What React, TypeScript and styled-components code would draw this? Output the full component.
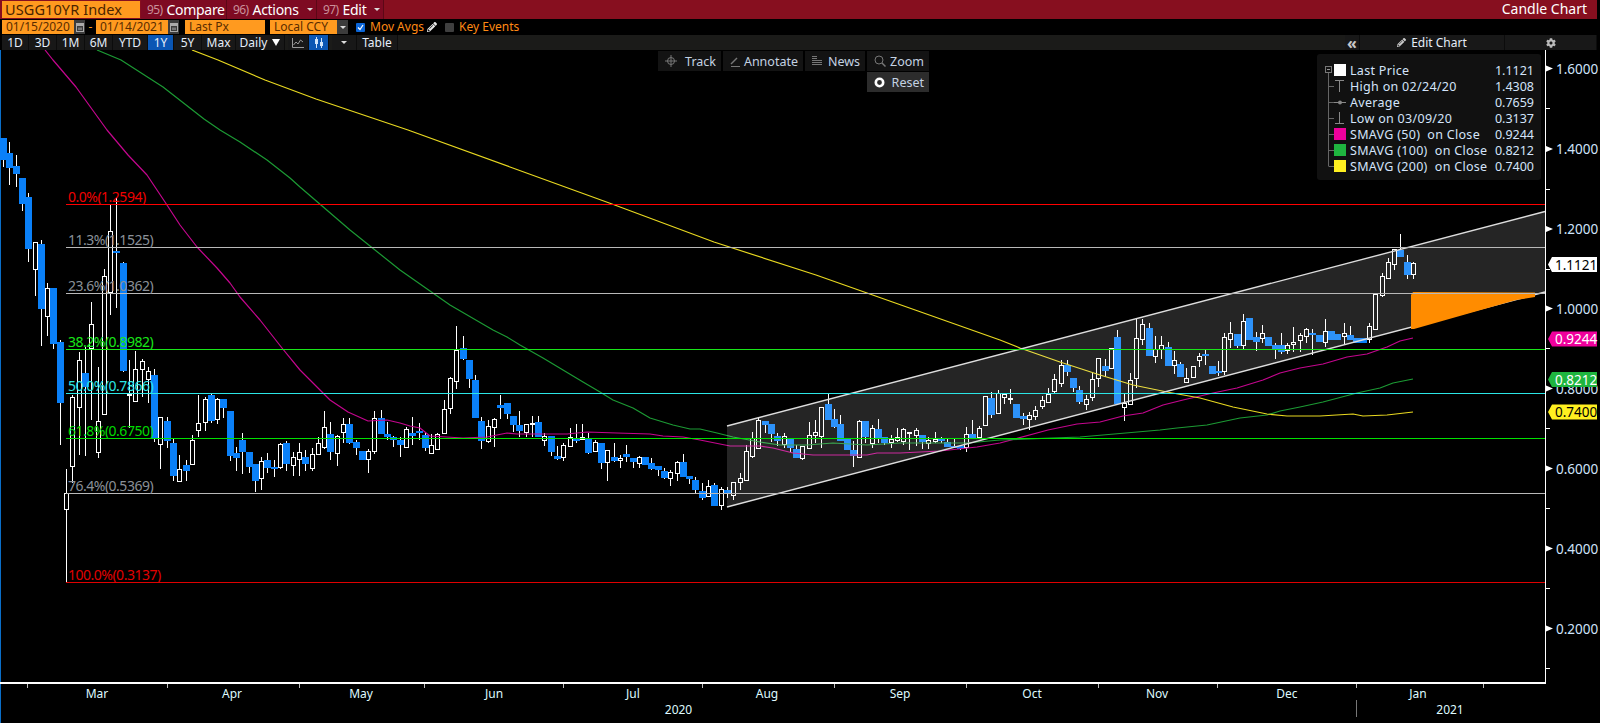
import React from 'react';
import styled, { createGlobalStyle } from 'styled-components';
import { FaCog, FaPencilAlt } from 'react-icons/fa';

const GlobalStyle = createGlobalStyle`
  html, body { margin: 0; padding: 0; background: #000; }
  body { font-family: "Noto Sans", "Open Sans", Arial, sans-serif; }
`;

const FONT = '"Noto Sans", "Open Sans", Arial, sans-serif';

const Page = styled.div`
  width: 1600px;
  height: 723px;
  background: #000;
  overflow: hidden;
  display: flex;
  flex-direction: column;
`;

const TitleBar = styled.div`
  height: 19px;
  margin-right: 3px;
  background: #870f1f;
  display: flex;
  align-items: stretch;
`;

const Ticker = styled.div`
  width: 138px;
  margin: 1px 1px 1px 2px;
  padding-left: 3px;
  background: #ff9a1f;
  color: #4a2400;
  font-size: 14.5px;
  line-height: 16px;
  letter-spacing: 0.1px;
  box-sizing: border-box;
`;

const Tab = styled.div<{ $w: number }>`
  width: ${(p) => p.$w}px;
  background: #7e0a22;
  border-right: 1px solid #5c0716;
  box-sizing: border-box;
  display: flex;
  align-items: center;
  padding-left: 6px;
  gap: 4px;
  color: #fff;
  font-size: 14px;
  letter-spacing: -0.3px;
`;

const TabCode = styled.span`
  color: #c9909a;
  font-size: 12px;
  letter-spacing: -0.6px;
`;

const Caret = styled.span`
  width: 0;
  height: 0;
  margin-left: 4px;
  border-left: 3px solid transparent;
  border-right: 3px solid transparent;
  border-top: 3px solid #ddd;
`;

const TitleRight = styled.div`
  margin-left: auto;
  padding-right: 10px;
  color: #fff;
  font-size: 14px;
  line-height: 18px;
`;

const ParamBar = styled.div`
  height: 14px;
  margin-top: 1px;
  display: flex;
  align-items: stretch;
  padding-left: 2px;
`;

const OrangeField = styled.div<{ $w: number; $ml?: number }>`
  width: ${(p) => p.$w}px;
  margin-left: ${(p) => p.$ml || 0}px;
  background: #ff9a1f;
  color: #5a2c00;
  font-size: 12px;
  line-height: 14px;
  padding-left: 4px;
  box-sizing: border-box;
`;

const FieldButton = styled.div`
  width: 11px;
  background: #3c3c3c;
  display: flex;
  align-items: center;
  justify-content: center;
`;

const Dash = styled.div`
  width: 11px;
  color: #ff9a1f;
  text-align: center;
  font-size: 12px;
  line-height: 14px;
`;

const Check = styled.div<{ $on?: boolean; $ml: number }>`
  width: 9px;
  height: 9px;
  align-self: center;
  margin-left: ${(p) => p.$ml}px;
  background: ${(p) => (p.$on ? '#0b66d8' : '#3f3f3f')};
  border-radius: 1px;
  display: flex;
  align-items: center;
  justify-content: center;
`;

const ParamLabel = styled.div<{ $ml: number }>`
  margin-left: ${(p) => p.$ml}px;
  color: #ff8a14;
  font-size: 12px;
  line-height: 14px;
`;

const RangeBar = styled.div`
  height: 15px;
  margin: 1px 3px 0 2px;
  display: flex;
  align-items: stretch;
  background: #1b1b19;
`;

const RangeButton = styled.div<{ $w: number; $active?: boolean; $ml?: number }>`
  width: ${(p) => p.$w}px;
  margin-left: ${(p) => p.$ml || 0}px;
  background: ${(p) => (p.$active ? '#0a56b4' : '#181818')};
  border-right: 1px solid #0c0c0c;
  box-sizing: border-box;
  display: flex;
  align-items: center;
  justify-content: center;
  gap: 5px;
  color: #e6eefa;
  font-size: 12px;
`;

const RangeFill = styled.div`
  flex: 1;
`;

const Chevrons = styled(RangeButton)`
  color: #c8c8c8;
  font-size: 16px;
  font-weight: 700;
`;

const ChartArea = styled.div`
  position: relative;
  flex: 1;
  border-left: 1px solid #0a6ec8;
`;

const ChartSvg = styled.svg`
  display: block;
  position: absolute;
  left: -1px;
  top: 0;
  width: 1600px;
  height: 673px;
  font-family: ${FONT};
`;

const ToolPanel = styled.div`
  position: absolute;
  left: 657px;
  top: 1px;
  display: grid;
  grid-template-columns: 63px 80px 60px 62px;
  grid-auto-rows: 20px;
  gap: 1px 2px;
`;

const ToolButton = styled.div<{ $pressed?: boolean }>`
  grid-column: ${(p) => (p.$pressed ? 4 : 'auto')};
  background: ${(p) => (p.$pressed ? '#2c2c2c' : '#131313')};
  display: flex;
  align-items: center;
  justify-content: space-between;
  padding: 0 5px 0 7px;
  color: #c4d2e2;
  font-size: 12.5px;
`;

const Legend = styled.div`
  position: absolute;
  left: 1316px;
  top: 4px;
  width: 224px;
  height: 126px;
  padding: 8px 7px 0 5px;
  box-sizing: border-box;
  background: #111;
  border-radius: 3px;
`;

const LegendRow = styled.div`
  height: 16px;
  display: flex;
  align-items: center;
  color: #d4e4fa;
  font-size: 12.5px;
  letter-spacing: 0.3px;
  white-space: pre;
`;

const LegendValue = styled.span`
  margin-left: auto;
  letter-spacing: 0;
`;

type Candle = ['w' | 'b', number, number, number, number, number];

// kind, x, body top, body bottom, high, low (all in page pixels)
const candles: Candle[] = [
  ['b',3.5,138,160,138,167],['b',9.5,153,168,142,185],['b',16.5,166,174,155,187],['b',22.5,178,204,178,211],
  ['b',28.5,197,249,193,262],['w',35,242,269,242,296],['b',41,244,309,240,346],['w',47,288,316,283,336],
  ['b',53.5,288,344,288,349],['b',60,342,403,340,445],['w',66,493,509,469,582],['w',72.5,397,466,395,483],
  ['w',79,360,407,352,455],['b',85,373,387,347,456],['w',91.5,324,348,302,420],['w',98,421,452,367,458],
  ['w',104,276,414,269,414],['w',110.5,231,292,205,315],['b',116.5,251,253,198,308],['b',123.5,263,371,262,372],
  ['w',129.5,394,395,360,428],['w',135,369,401,351,402],['w',142.5,361,369,359,397],['w',148.5,371,379,367,403],
  ['b',154.5,375,438,369,442],['w',160.5,417,444,417,469],['b',167.5,421,441,417,448],['b',173.5,443,476,439,481],
  ['w',179,469,481,455,482],['b',186,465,471,460,481],['w',192,440,464,435,464],['w',198,423,430,395,437],
  ['w',205,399,422,397,431],['b',211.5,395,421,393,423],['w',217.5,399,419,398,424],['b',223.5,399,408,399,418],
  ['b',230.5,411,456,411,461],['b',236.5,453,458,447,471],['b',242.5,440,452,433,474],['b',249,452,467,452,473],
  ['b',255,464,481,464,492],['w',261,461,478,457,490],['b',267.5,460,468,453,473],['b',274,467,469,460,477],
  ['w',280.5,444,467,443,469],['b',286.5,443,464,441,471],['w',293,457,465,452,476],['w',299,452,459,443,476],
  ['b',305.5,457,464,450,471],['w',312,454,468,448,471],['w',318,443,454,437,455],['w',324.5,427,447,411,449],
  ['b',330.5,434,452,422,460],['w',337,436,453,435,466],['w',343,424,432,418,443],['b',349.5,424,443,418,444],
  ['b',356.5,442,448,440,455],['b',362.5,451,460,451,460],['w',368.5,451,459,449,473],['w',374.5,418,451,411,454],
  ['b',381.5,418,434,410,434],['b',387.5,434,437,422,440],['b',393.5,437,440,436,447],['b',400.5,440,445,437,457],
  ['w',406.5,429,447,427,447],['b',412.5,433,436,417,445],['b',419.5,431,433,423,440],['b',425.5,435,448,433,451],
  ['w',431.5,445,453,434,453],['w',437.5,434,449,433,449],['w',444,409,433,400,434],['w',450.5,378,408,377,414],
  ['w',456.5,350,381,326,389],['b',463.5,348,359,336,360],['b',469.5,360,379,360,388],['b',475.5,380,418,375,418],
  ['b',481.5,421,441,417,449],['w',488.5,426,441,420,443],['w',494.5,419,427,418,447],['b',500.5,405,408,395,419],
  ['b',507.5,403,414,403,419],['b',513.5,416,425,416,432],['b',519.5,425,431,411,437],['w',526,424,432,424,437],
  ['w',532.5,423,424,416,437],['b',538.5,422,437,416,437],['w',544.5,436,440,433,446],['b',551.5,436,452,436,456],
  ['b',557.5,456,459,446,460],['w',563.5,445,457,443,461],['w',570.5,437,446,428,446],['b',576.5,438,441,424,443],
  ['w',582,437,439,424,439],['b',588.5,439,453,433,454],['w',595,442,451,440,452],['b',601.5,443,463,443,469],
  ['w',607.5,450,462,450,481],['b',614.5,457,461,443,462],['w',620.5,458,460,455,468],['b',626.5,454,457,445,462],
  ['b',633.5,458,462,458,468],['w',639.5,457,463,456,468],['b',645.5,457,465,457,465],['b',651.5,463,469,458,470],
  ['b',658.5,466,470,466,476],['b',664.5,471,478,468,479],['w',670.5,472,478,470,486],['w',677.5,462,473,461,481],
  ['b',683.5,462,477,454,477],['b',689.5,476,479,476,484],['b',695.5,480,490,477,493],['b',702.5,491,498,483,500],
  ['w',708.5,486,496,480,496],['b',714.5,485,506,483,506],['w',721,489,505,487,510],['b',727.5,490,493,487,498],
  ['w',733.5,482,495,482,500],['w',740,478,482,473,490],['w',746.5,451,480,445,480],['w',752.5,438,456,432,458],
  ['w',758.5,420,448,417,448],['b',765.5,421,425,421,433],['b',771.5,424,434,424,442],['b',777.5,436,441,433,446],
  ['w',784,436,444,433,448],['b',790.5,439,448,439,452],['b',796.5,449,458,445,458],['w',802.5,446,458,446,460],
  ['w',809,435,448,422,448],['w',815,432,435,420,443],['w',821.5,407,436,407,448],['b',828.5,404,420,393,420],
  ['b',834.5,419,427,409,428],['b',840.5,424,441,415,441],['b',847.5,439,450,439,450],['b',853.5,450,456,441,467],
  ['w',859.5,421,457,420,457],['b',865.5,421,437,421,443],['w',872,428,443,425,448],['b',878.5,429,439,419,443],
  ['b',884.5,437,443,437,445],['w',891,439,442,435,448],['w',897,437,440,428,442],['w',903,429,441,428,445],
  ['w',909.5,432,433,432,450],['w',916,430,435,428,446],['b',922.5,435,442,435,449],['w',928.5,440,443,437,449],
  ['w',935,439,441,432,443],['b',941.5,439,441,437,443],['b',947.5,442,447,438,447],['b',954.5,446,448,439,448],
  ['b',960.5,446,449,446,450],['w',966.5,434,447,427,452],['b',972.5,434,439,420,439],['w',979,428,437,426,437],
  ['w',985,396,425,396,425],['b',991.5,398,415,392,418],['w',998,393,413,390,413],['w',1004,394,397,393,404],
  ['w',1010,398,399,389,404],['b',1016.5,404,418,404,418],['b',1023.5,416,419,413,425],['w',1029.5,415,419,412,430],
  ['w',1035.5,410,416,406,420],['w',1042.5,400,406,396,409],['w',1048.5,394,402,388,403],['w',1054.5,379,391,374,393],
  ['w',1061.5,365,383,360,387],['b',1067.5,365,372,360,376],['b',1073.5,378,388,378,392],['b',1079.5,390,402,386,404],
  ['w',1086,399,404,395,410],['w',1092.5,379,397,373,401],['w',1098.5,358,378,358,387],['b',1105.5,366,371,359,377],
  ['w',1111,348,368,348,368],['b',1117.5,337,404,330,405],['w',1124,403,407,394,421],['w',1130,380,404,373,405],
  ['w',1136,338,378,318,388],['w',1142,324,339,319,345],['b',1149.5,328,356,323,356],['w',1155.5,349,356,336,363],
  ['w',1161.5,345,349,336,359],['b',1168.5,347,366,342,366],['w',1174.5,360,365,351,374],['b',1180.5,364,377,362,377],
  ['w',1186.5,378,382,368,382],['w',1193,366,377,366,377],['w',1199,356,360,353,367],['b',1205.5,354,356,350,365],
  ['b',1212.5,366,374,366,374],['b',1218.5,371,373,361,376],['w',1224.5,337,371,333,375],['w',1230.5,333,339,322,348],
  ['b',1237.5,334,346,334,348],['w',1243.5,321,345,314,349],['b',1249.5,318,340,318,340],['b',1256.5,337,342,332,351],
  ['w',1262.5,333,338,325,343],['b',1268.5,337,346,337,346],['b',1275.5,345,349,343,359],['b',1281.5,345,352,333,354],
  ['w',1287.5,345,350,343,354],['w',1293.5,342,344,327,352],['w',1300,335,340,333,352],['w',1306.5,329,336,328,343],
  ['b',1312.5,333,335,329,355],['b',1319.5,335,342,335,342],['w',1325.5,331,342,319,347],['b',1331.5,331,340,331,340],
  ['b',1337.5,334,340,334,340],['w',1344.5,333,336,323,344],['b',1350.5,335,340,326,340],['b',1356.5,338,343,338,343],
  ['b',1363,338,343,338,343],['w',1369,326,339,323,343],['w',1375.5,294,329,294,329],['w',1382,276,295,273,297],
  ['w',1388,262,278,258,279],['w',1394,249,264,249,270],['b',1400.5,250,257,234,257],['b',1407.5,262,275,255,279],
  ['w',1413,263,274,262,279],
];

const sma50 = '45,50 53,60 76,87 107,130 128,155 147,175 165,202 180,225 197,247 217,268 230,283 240,297 260,320 282,348 300,370 310,380 330,400 348,412 368,421 387,420 400,423 410,426 420,428 430,436 463,438 487,437 507,433 517,434 567,434 587,432 617,433 650,434 663,436 683,437 700,440 730,446 760,446 773,448 793,453 813,455 867,455 877,453 900,453 940,451 977,447 1000,443 1048,430 1077,424 1100,422 1123,416 1143,413 1163,405 1183,400 1213,393 1237,388 1263,380 1280,373 1300,368 1323,364 1347,357 1367,354 1387,347 1400,341 1413,338';
const sma100 = '97,50 121,60 163,87 204,119 220,130 240,142 267,160 290,178 300,187 350,230 400,270 450,305 493,330 507,337 520,345 543,358 563,370 583,382 600,392 613,400 633,408 650,418 673,425 690,429 700,429 717,433 733,437 760,442 780,445 807,445 833,443 867,445 900,443 933,443 967,443 1000,440 1080,437 1160,430 1177,428 1207,425 1240,418 1267,415 1280,411 1300,407 1323,402 1357,393 1380,388 1393,383 1413,379';
const sma200 = '192,50 218,60 265,80 316,99 408,130 510,167 612,204 714,242 816,275 867,293 918,311 1000,340 1020,348 1060,362 1100,375 1133,385 1167,392 1200,398 1233,407 1267,414 1287,416 1320,416 1353,414 1363,416 1387,415 1413,412';

const fibs = [
  { y: 204, label: '0.0%(1.2594)', line: '#ff0000', text: '#f00000' },
  { y: 247, label: '11.3%(1.1525)', line: '#b9b9b9', text: '#8a9098' },
  { y: 293, label: '23.6%(1.0362)', line: '#b9b9b9', text: '#8a9098' },
  { y: 349, label: '38.2%(0.8982)', line: '#19e619', text: '#19e619' },
  { y: 393, label: '50.0%(0.7866)', line: '#2be6e6', text: '#2be6e6' },
  { y: 438, label: '61.8%(0.6750)', line: '#00e000', text: '#00d800' },
  { y: 493, label: '76.4%(0.5369)', line: '#b9b9b9', text: '#8a9098' },
  { y: 582, label: '100.0%(0.3137)', line: '#e00000', text: '#e00000' },
];

const axisLabels = [
  ['1.6000', 68.5], ['1.4000', 149], ['1.2000', 229], ['1.0000', 308.5],
  ['0.8000', 388.5], ['0.6000', 468.5], ['0.4000', 548.5], ['0.2000', 628.5],
] as const;

const minorTicks = [108.5, 189, 269, 348.5, 428, 508, 588, 668.5];
const monthTicks = [27.5, 167, 299, 424.5, 563, 702, 834, 966, 1098, 1217, 1356, 1483];
const months = [
  ['Mar', 97], ['Apr', 232], ['May', 361], ['Jun', 494], ['Jul', 633], ['Aug', 767],
  ['Sep', 900], ['Oct', 1032], ['Nov', 1157], ['Dec', 1287], ['Jan', 1418],
] as const;

const badges = [
  { y: 264.5, label: '1.1121', bg: '#ffffff', fg: '#000' },
  { y: 339, label: '0.9244', bg: '#f0009c', fg: '#fff' },
  { y: 379.5, label: '0.8212', bg: '#1fb53f', fg: '#fff' },
  { y: 412, label: '0.7400', bg: '#fff020', fg: '#000' },
];

const CandleMark = ({ c }: { c: Candle }) => {
  const [kind, x, top, bottom, high, low] = c;
  const wick = Math.floor(x) + 0.5;
  return (
    <g shapeRendering="crispEdges">
      <line x1={wick} x2={wick} y1={high} y2={low} stroke="#fff" />
      {kind === 'b' ? (
        <rect x={Math.round(x - 3.5)} y={top} width={7} height={bottom - top} fill="#0a80f8" />
      ) : (
        <rect x={Math.floor(x) - 1.5} y={top + 0.5} width={4} height={bottom - top} fill="#000" stroke="#fff" />
      )}
    </g>
  );
};

const Chart = () => (
  <ChartSvg viewBox="0 50 1600 673">
    {candles.map((c) => (
      <CandleMark key={c[1]} c={c} />
    ))}
    <polyline points={sma50} fill="none" stroke="#c4068e" strokeWidth={1.2} strokeLinejoin="round" />
    <polyline points={sma100} fill="none" stroke="#1c9a34" strokeWidth={1.2} strokeLinejoin="round" />
    <polyline points={sma200} fill="none" stroke="#e8d820" strokeWidth={1.2} strokeLinejoin="round" />

    <polygon points="727,426 1545,211.5 1545,292 727,507" fill="#fff" fillOpacity={0.145} />
    <polyline points="727,426 1545,211.5" fill="none" stroke="#ddd" strokeWidth={1.4} />
    <polyline points="727,507 1545,292" fill="none" stroke="#ddd" strokeWidth={1.4} />
    <polygon points="1411,295 1413,292 1535,292.5 1535,297 1516,300 1414,329 1411,329" fill="#ff8c00" />

    {fibs.map((f) => (
      <g key={f.label}>
        <line x1={66} x2={1545} y1={f.y + 0.5} y2={f.y + 0.5} stroke={f.line} shapeRendering="crispEdges" />
        <text x={68} y={f.y - 2} fill={f.text} fontSize={14} letterSpacing={-0.5}>
          {f.label}
        </text>
      </g>
    ))}

    <g shapeRendering="crispEdges">
      <line x1={1545.5} x2={1545.5} y1={50} y2={684} stroke="#fff" />
      <rect x={0} y={682} width={1546} height={2} fill="#fff" />
      {minorTicks.map((y) => (
        <line key={y} x1={1546} x2={1550} y1={y} y2={y} stroke="#fff" />
      ))}
      {monthTicks.map((x) => (
        <line key={x} x1={x} x2={x} y1={684} y2={688} stroke="#bbb" />
      ))}
      <line x1={1356.5} x2={1356.5} y1={700} y2={717} stroke="#777" />
    </g>

    {axisLabels.map(([label, y]) => (
      <g key={label}>
        <polygon points={`1546,${y - 3} 1553,${y} 1546,${y + 3}`} fill="#fff" />
        <text x={1556} y={y + 5} fill="#cfe4fb" fontSize={13.5}>
          {label}
        </text>
      </g>
    ))}

    {badges.map((b) => (
      <g key={b.label}>
        <polygon
          points={`1548,${b.y} 1552,${b.y - 7.5} 1597,${b.y - 7.5} 1597,${b.y + 7.5} 1552,${b.y + 7.5}`}
          fill={b.bg}
        />
        <text x={1555} y={b.y + 5} fill={b.fg} fontSize={13.5}>
          {b.label}
        </text>
      </g>
    ))}

    {months.map(([label, x]) => (
      <text key={label} x={x} y={698} fill="#dffaff" fontSize={12} textAnchor="middle">
        {label}
      </text>
    ))}
    <text x={678.5} y={714} fill="#dffaff" fontSize={12} textAnchor="middle">2020</text>
    <text x={1450} y={714} fill="#dffaff" fontSize={12} textAnchor="middle">2021</text>
  </ChartSvg>
);

const CalendarIcon = () => (
  <svg width="8" height="10" viewBox="0 0 8 10">
    <rect x="0.5" y="1.5" width="7" height="8" fill="none" stroke="#aaa" />
    <rect x="0.5" y="1.5" width="7" height="2.5" fill="#aaa" />
    <rect x="2" y="5.5" width="4" height="2.5" fill="#777" />
  </svg>
);

const LegendKey = ({ kind, color, last }: { kind: string; color?: string; last?: boolean }) => (
  <svg width="28" height="16" viewBox="0 0 28 16" style={{ flex: 'none' }}>
    {kind === 'root' ? (
      <>
        <rect x="3.5" y="4.5" width="6" height="6" fill="none" stroke="#777" />
        <line x1="5" x2="8" y1="7.5" y2="7.5" stroke="#999" />
        <line x1="6.5" x2="6.5" y1="11" y2="16" stroke="#666" />
      </>
    ) : (
      <>
        <line x1="6.5" x2="6.5" y1="0" y2={last ? 8 : 16} stroke="#666" />
        <line x1="6.5" x2="12" y1="8.5" y2="8.5" stroke="#666" />
      </>
    )}
    {color && <rect x="12" y="2" width="12" height="12" fill={color} />}
    {kind === 'high' && <path d="M13 2.5h9M17.5 2.5V14" stroke="#888" fill="none" />}
    {kind === 'avg' && (
      <>
        <line x1="12" x2="24" y1="8.5" y2="8.5" stroke="#888" />
        <circle cx="18" cy="8.5" r="2" fill="#888" />
      </>
    )}
    {kind === 'low' && <path d="M13 13.5h9M17.5 13.5V2" stroke="#888" fill="none" />}
  </svg>
);

const legendRows = [
  { kind: 'root', color: '#ffffff', label: 'Last Price', value: '1.1121' },
  { kind: 'high', label: 'High on 02/24/20', value: '1.4308' },
  { kind: 'avg', label: 'Average', value: '0.7659' },
  { kind: 'low', label: 'Low on 03/09/20', value: '0.3137' },
  { kind: 'ma', color: '#f0009c', label: 'SMAVG (50)  on Close', value: '0.9244' },
  { kind: 'ma', color: '#1fb53f', label: 'SMAVG (100)  on Close', value: '0.8212' },
  { kind: 'ma', color: '#fff020', label: 'SMAVG (200)  on Close', value: '0.7400', last: true },
];

const rangeButtons = [
  ['1D', 27], ['3D', 28], ['1M', 28], ['6M', 28], ['YTD', 35],
] as const;

const App = () => (
  <Page>
    <GlobalStyle />
    <TitleBar>
      <Ticker>USGG10YR Index</Ticker>
      <Tab $w={86}><TabCode>95)</TabCode>Compare</Tab>
      <Tab $w={90}><TabCode>96)</TabCode>Actions<Caret /></Tab>
      <Tab $w={67}><TabCode>97)</TabCode>Edit<Caret /></Tab>
      <TitleRight>Candle Chart</TitleRight>
    </TitleBar>

    <ParamBar>
      <OrangeField $w={72}>01/15/2020</OrangeField>
      <FieldButton><CalendarIcon /></FieldButton>
      <Dash>-</Dash>
      <OrangeField $w={72}>01/14/2021</OrangeField>
      <FieldButton><CalendarIcon /></FieldButton>
      <OrangeField $w={80} $ml={6}>Last Px</OrangeField>
      <OrangeField $w={67} $ml={5}>Local CCY</OrangeField>
      <FieldButton><Caret style={{ margin: 0 }} /></FieldButton>
      <Check $on $ml={8}>
        <svg width="7" height="7" viewBox="0 0 7 7">
          <path d="M1 3.5 3 5.5 6 1" stroke="#fff" strokeWidth="1.2" fill="none" />
        </svg>
      </Check>
      <ParamLabel $ml={5}>Mov Avgs</ParamLabel>
      <FaPencilAlt size={10} color="#e8e8e8" style={{ alignSelf: 'center', marginLeft: 3 }} />
      <Check $ml={8} />
      <ParamLabel $ml={5}>Key Events</ParamLabel>
    </ParamBar>

    <RangeBar>
      {rangeButtons.map(([label, w]) => (
        <RangeButton key={label} $w={w}>{label}</RangeButton>
      ))}
      <RangeButton $w={26} $active>1Y</RangeButton>
      <RangeButton $w={28}>5Y</RangeButton>
      <RangeButton $w={34}>Max</RangeButton>
      <RangeButton $w={49}>
        Daily
        <svg width="8" height="7" viewBox="0 0 8 7"><path d="M0 0h8L4 7z" fill="#fff" /></svg>
      </RangeButton>
      <RangeButton $w={21} $ml={3}>
        <svg width="12" height="10" viewBox="0 0 12 10">
          <path d="M.5 0v9.5H12" stroke="#999" fill="none" />
          <path d="M1.5 7 4 4l2 2 2.5-4L11 4" stroke="#999" fill="none" />
        </svg>
      </RangeButton>
      <RangeButton $w={20} $active>
        <svg width="10" height="11" viewBox="0 0 10 11">
          <path d="M2.5 0v11M7.5 1v10" stroke="#cfe4fb" />
          <rect x="1" y="2" width="3" height="5" fill="#cfe4fb" />
          <rect x="6" y="5" width="3" height="4" fill="#cfe4fb" />
        </svg>
      </RangeButton>
      <RangeButton $w={25} $ml={3}><Caret style={{ margin: 0 }} /></RangeButton>
      <RangeButton $w={41}>Table</RangeButton>
      <RangeFill />
      <Chevrons $w={15}>«</Chevrons>
      <RangeButton $w={145}>
        <FaPencilAlt size={9} color="#ccc" />
        Edit Chart
      </RangeButton>
      <RangeButton $w={92}><FaCog size={10} color="#bbb" /></RangeButton>
    </RangeBar>

    <ChartArea>
      <Chart />
      <ToolPanel>
        <ToolButton>
          <svg width="12" height="12" viewBox="0 0 12 12">
            <circle cx="6" cy="6" r="3.5" fill="none" stroke="#777" />
            <path d="M6 0v12M0 6h12" stroke="#777" />
          </svg>
          Track
        </ToolButton>
        <ToolButton>
          <svg width="11" height="11" viewBox="0 0 11 11">
            <path d="M1 8 7 2" stroke="#777" strokeWidth="1.5" />
            <path d="M1 10.5h9" stroke="#777" />
          </svg>
          Annotate
        </ToolButton>
        <ToolButton>
          <svg width="10" height="10" viewBox="0 0 10 10">
            <path d="M0 .5h5M0 2.5h5M0 4.5h10M0 6.5h10M0 8.5h10" stroke="#777" />
          </svg>
          News
        </ToolButton>
        <ToolButton>
          <svg width="12" height="12" viewBox="0 0 12 12">
            <circle cx="5" cy="5" r="4" fill="none" stroke="#777" />
            <path d="m8 8 3.5 3.5" stroke="#777" strokeWidth="1.5" />
          </svg>
          Zoom
        </ToolButton>
        <ToolButton $pressed>
          <svg width="11" height="11" viewBox="0 0 11 11">
            <circle cx="5.5" cy="5.5" r="3.7" fill="none" stroke="#fff" strokeWidth="2.6" />
          </svg>
          Reset
        </ToolButton>
      </ToolPanel>
      <Legend>
        {legendRows.map((r) => (
          <LegendRow key={r.label}>
            <LegendKey kind={r.kind} color={r.color} last={r.last} />
            {r.label}
            <LegendValue>{r.value}</LegendValue>
          </LegendRow>
        ))}
      </Legend>
    </ChartArea>
  </Page>
);

export default App;
